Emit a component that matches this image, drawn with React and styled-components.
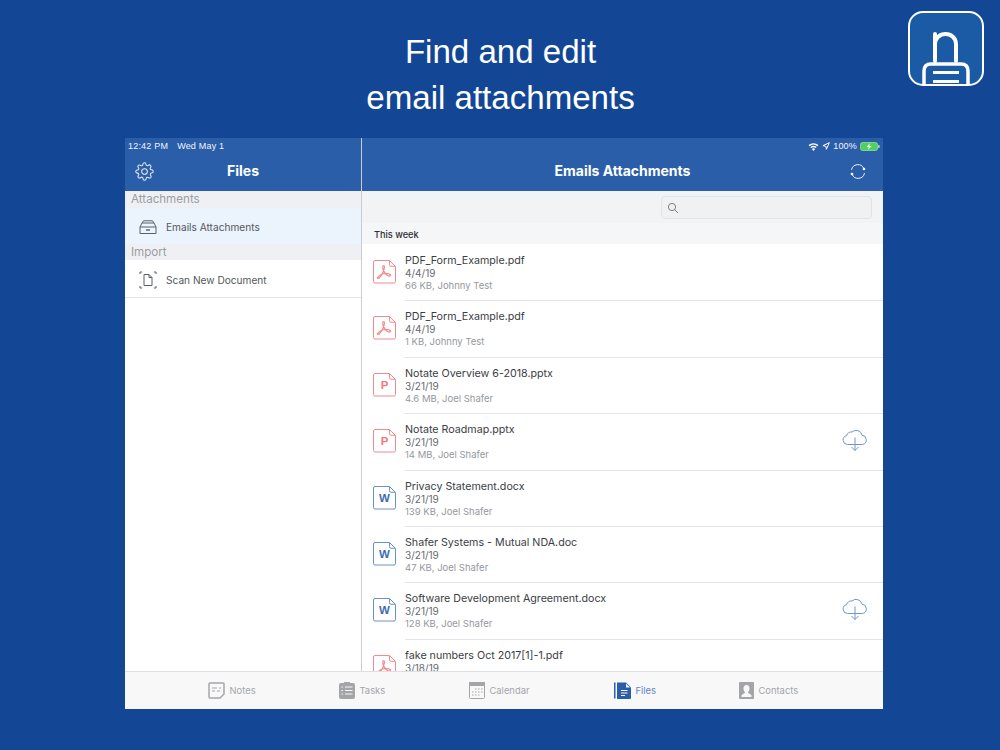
import React from "react";
import styled, { createGlobalStyle } from "styled-components";

const Global = createGlobalStyle`
  html, body { margin: 0; padding: 0; background: #134796; }
  * { box-sizing: border-box; }
`;

const Page = styled.div`
  position: relative;
  width: 1000px;
  height: 750px;
  overflow: hidden;
  background: #134796;
  font-family: "Inter", "Liberation Sans", sans-serif;
  padding-top: 29px;
`;
const Headline = styled.h1`
  margin: 0 0 17px 0;
  padding-left: 1px;
  height: 92px;
  text-align: center;
  color: #fff;
  font: 400 33.1px/46px "Liberation Sans", sans-serif;
`;
const LogoBox = styled.div`
  position: absolute;
  left: 908px;
  top: 11px;
  width: 76px;
  height: 76px;
`;
const Screen = styled.div`
  margin-left: 125px;
  width: 758px;
  height: 571px;
  background: #fff;
  display: flex;
  flex-direction: column;
  overflow: hidden;
`;
const Panes = styled.div`
  flex: 1;
  min-height: 0;
  display: flex;
`;
const Sidebar = styled.div`
  width: 237px;
  flex: none;
  border-right: 1px solid #c9ccd2;
  display: flex;
  flex-direction: column;
`;
const Main = styled.div`
  flex: 1;
  min-width: 0;
  display: flex;
  flex-direction: column;
`;
const NavBar = styled.div`
  height: 53px;
  flex: none;
  background: #2a5ea8;
  display: flex;
  flex-direction: column;
  color: #fff;
`;
const StatusRow = styled.div`
  height: 16px;
  padding: 0 3px;
  display: flex;
  align-items: center;
  justify-content: ${(p) => (p.$end ? "flex-end" : "flex-start")};
  gap: ${(p) => (p.$end ? "3px" : "9px")};
  font: 400 9px/16px "Liberation Sans", sans-serif;
  letter-spacing: 0.2px;
  color: #f2f5fa;
`;
const NavContent = styled.div`
  position: relative;
  flex: 1;
  display: flex;
  align-items: center;
  justify-content: center;
  padding-bottom: 3px;
  font: 700 14px/18px "Inter", "Liberation Sans", sans-serif;
`;
const NavIcon = styled.span`
  position: absolute;
  top: ${(p) => (p.$right ? "10px" : "8px")};
  display: flex;
  ${(p) => (p.$right ? "right: 17px;" : "left: 10px;")}
`;
const SectionHead = styled.div`
  height: ${(p) => p.$h || 16}px;
  background: #eff0f3;
  color: #9a9ea5;
  padding-left: 6px;
  font: 400 11.6px/${(p) => p.$h || 16}px "Inter", "Liberation Sans", sans-serif;
`;
const SideRow = styled.div`
  height: ${(p) => p.$h}px;
  display: flex;
  align-items: center;
  gap: 9px;
  padding: 2px 0 0 14px;
  background: ${(p) => (p.$active ? "#ebf3fd" : "#fff")};
  border-bottom: ${(p) => (p.$active ? "none" : "1px solid #e4e5e8")};
  color: #54585e;
  font: 400 10.15px/14px "Inter", "Liberation Sans", sans-serif;
`;
const SearchBand = styled.div`
  height: 32px;
  flex: none;
  background: #f2f3f5;
  display: flex;
  justify-content: flex-end;
  padding: 5px 11px 0 0;
`;
const SearchBox = styled.div`
  width: 211px;
  height: 23px;
  background: #f0f1f3;
  border: 1px solid #e2e3e6;
  border-radius: 4px;
  display: flex;
  align-items: center;
  padding-left: 5px;
`;
const WeekHead = styled.div`
  height: 21px;
  flex: none;
  background: #f5f6f7;
  color: #2c2e33;
  padding: 2px 0 0 12px;
  font: 500 9.2px/20px "Inter", "Liberation Sans", sans-serif;
`;
const List = styled.div`
  flex: 1;
  min-height: 0;
  overflow: hidden;
  padding-top: 1px;
`;
const Row = styled.div`
  height: 56.4px;
  display: flex;
  align-items: flex-start;
  padding: 8px 15px 0 11px;
  position: relative;
  &::after {
    content: "";
    position: absolute;
    left: 43px;
    right: 0;
    bottom: 0;
    height: 1px;
    background: #e4e5e8;
  }
`;
const FileIconBox = styled.div`
  width: 23px;
  height: 24px;
  margin: 7px 9px 0 0;
  flex: none;
`;
const Info = styled.div`
  flex: 1;
  min-width: 0;
`;
const FileName = styled.div`
  margin-top: 1px;
  color: #3b3e44;
  font: 400 10.68px/14px "Inter", "Liberation Sans", sans-serif;
`;
const FileDate = styled.div`
  color: #666a70;
  font: 400 10px/10px "Inter", "Liberation Sans", sans-serif;
`;
const FileMeta = styled.div`
  color: #95989e;
  font: 400 9.5px/15px "Inter", "Liberation Sans", sans-serif;
`;
const Cloud = styled.div`
  flex: none;
  margin-top: 6px;
  display: flex;
`;
const TabBar = styled.div`
  height: 38px;
  flex: none;
  background: #f8f8f9;
  border-top: 1px solid #dedfe2;
`;
const Tabs = styled.div`
  display: flex;
  height: 100%;
  padding-left: 83px;
`;
const Tab = styled.div`
  width: ${(p) => p.$w}px;
  flex: none;
  display: flex;
  align-items: center;
  gap: 4.5px;
  color: ${(p) => (p.$active ? "#5f86c2" : "#a3a5a9")};
  font: 400 9.4px/14px "Inter", "Liberation Sans", sans-serif;
`;

const Logo = () => (
  <svg width="76" height="76" viewBox="0 0 76 76">
    <defs>
      <clipPath id="lg"><rect x="1" y="1" width="74" height="73" rx="14" /></clipPath>
    </defs>
    <rect x="1" y="1" width="74" height="73" rx="14" fill="#1b5aa5" stroke="#fff" strokeWidth="2" />
    <g clipPath="url(#lg)" fill="none" stroke="#fff" strokeLinecap="round">
      <path d="M27 23V50M27 33c0-6 5-10 10.500-10s10.500 4 10.500 10v17" strokeWidth="4" />
      <path d="M16 76V60c0-4.500 2.500-7 7-7h30c4.500 0 7 2.500 7 7v16" strokeWidth="3.500" />
      <path d="M25 61.500h26M25 70.500h26" strokeWidth="3" strokeLinecap="butt" />
    </g>
  </svg>
);

const Gear = () => (
  <svg width="19" height="19" viewBox="0 0 24 24" fill="none" stroke="#e4ecf7" strokeWidth="1.3" strokeLinejoin="round">
    <circle cx="12" cy="12" r="3.6" />
    <path d="M19.4 15a1.65 1.65 0 0 0 .33 1.82l.06.06a2 2 0 1 1-2.83 2.83l-.06-.06a1.65 1.65 0 0 0-2.8 1.17V21a2 2 0 1 1-4 0v-.09A1.65 1.65 0 0 0 7.2 19.7l-.06.06a2 2 0 1 1-2.83-2.83l.06-.06a1.65 1.65 0 0 0-1.17-2.8H3a2 2 0 1 1 0-4h.09A1.65 1.65 0 0 0 4.3 7.2l-.06-.06a2 2 0 1 1 2.83-2.83l.06.06a1.65 1.65 0 0 0 2.8-1.17V3a2 2 0 1 1 4 0v.09a1.65 1.65 0 0 0 2.8 1.17l.06-.06a2 2 0 1 1 2.83 2.83l-.06.06a1.65 1.65 0 0 0 1.17 2.8H21a2 2 0 1 1 0 4h-.09A1.65 1.65 0 0 0 19.4 15z" />
  </svg>
);

const Refresh = () => (
  <svg width="16" height="15" viewBox="0 0 16 15" fill="none" stroke="#eef3fa" strokeWidth="1">
    <path d="M1.500 5.800A6.500 6.500 0 0 1 13.800 4.500" />
    <path d="M14.500 9.200A6.500 6.500 0 0 1 2.200 10.500" />
    <circle cx="14" cy="5" r="1.300" fill="#fff" stroke="none" />
    <circle cx="2" cy="10" r="1.300" fill="#fff" stroke="none" />
  </svg>
);

const Wifi = () => (
  <svg width="11" height="9" viewBox="0 0 11 9" fill="#fff">
    <path d="M5.5 9 3.9 7a2.4 2.4 0 0 1 3.2 0zM3.2 6.1 2.3 5a5 5 0 0 1 6.4 0l-.9 1.1a3.6 3.6 0 0 0-4.6 0zM1.6 4.2.6 3a7.6 7.6 0 0 1 9.8 0l-1 1.2a6 6 0 0 0-7.8 0z" />
  </svg>
);
const Arrow = () => (
  <svg width="8" height="8" viewBox="0 0 8 8" fill="none" stroke="#fff" strokeWidth="1">
    <path d="M7.3.7.9 3.7l3 .6.5 3z" strokeLinejoin="round" />
  </svg>
);
const Battery = () => (
  <svg width="20" height="9" viewBox="0 0 20 9">
    <rect x=".5" y=".5" width="17" height="8" rx="2" fill="#4cd35a" stroke="#9fd6a8" strokeWidth=".8" />
    <rect x="18.2" y="3" width="1.3" height="3" rx=".6" fill="#cfe0f0" />
    <path d="M9.8 1.3 6.5 5h2.2l-.6 2.7L11.5 4H9.3z" fill="#fff" />
  </svg>
);
const Drawer = () => (
  <svg width="18" height="14" viewBox="0 0 18 14" fill="none" stroke="#5a5e65" strokeWidth="1">
    <path d="M3 3 4.500.8h9L15 3" />
    <path d="M1 7 3 3h12l2 4" />
    <path d="M1 7h16v6.500H1z" />
    <path d="M7 10h4" strokeWidth="1.400" />
  </svg>
);
const Scan = () => (
  <svg width="18" height="18" viewBox="0 0 18 18" fill="none" stroke="#5a5e65" strokeWidth="1">
    <path d="M1 3V1h2M15 1h2v2M1 15v2h2M15 17h2v-2" />
    <path d="M5 3.500h5l3 3v8H5z" strokeLinejoin="round" />
    <path d="M10 3.500v3h3" />
  </svg>
);
const Mag = () => (
  <svg width="12" height="12" viewBox="0 0 12 12" fill="none" stroke="#7c7f85" strokeWidth="1">
    <circle cx="5" cy="5" r="3.6" />
    <path d="M7.7 7.7 11 11" />
  </svg>
);

const FileShape = ({ color, children }) => (
  <svg width="23" height="24" viewBox="0 0 23 24" fill="none" stroke={color} strokeWidth="1">
    <path d="M2 .5h14.500L22.500 6.500V21.500a1.500 1.500 0 0 1-1.500 1.500H2a1.500 1.500 0 0 1-1.500-1.500V2A1.500 1.500 0 0 1 2 .5z" strokeLinejoin="round" />
    <path d="M16.500.8v4a1.500 1.500 0 0 0 1.500 1.500h4.300" />
    {children}
  </svg>
);
const PdfGlyph = () => (
  <path d="M10.500 5.500C9.500 5.500 9.500 8 10.500 10.500 12 14 15 16.500 17 16 18.500 15.500 17 13.500 13.500 13.500 10 13.500 6 15.500 4.500 17.500 3.800 18.500 5 19 6.500 17.500 9 15 11.500 9.500 11.500 7 11.500 6 11 5.500 10.500 5.500z" strokeWidth="1.200" />
);
const LetterText = styled.text`
  font: 700 11.5px "Liberation Sans", sans-serif;
`;
const FileIcon = ({ kind }) => {
  if (kind === "pdf") return <FileShape color="#f58a8d"><PdfGlyph /></FileShape>;
  const color = kind === "ppt" ? "#f58a8d" : "#6a90c8";
  const ink = kind === "ppt" ? "#f47a7d" : "#3c6db3";
  return (
    <FileShape color={color}>
      <LetterText x="11.500" y="16" textAnchor="middle" fill={ink} stroke="none">{kind === "ppt" ? "P" : "W"}</LetterText>
    </FileShape>
  );
};
const CloudIcon = () => (
  <svg width="26" height="24" viewBox="0 0 26 24" fill="none" stroke="#6e97ce" strokeWidth="1">
    <path d="M9 16.500H5.500a4.500 4.500 0 0 1-.8-8.900A4.500 4.500 0 0 1 10 4a6 6 0 0 1 10 3.200 4.700 4.700 0 0 1 .5 9.300H17" strokeLinecap="round" />
    <path d="M13 9.500V22.500M9.500 19 13 22.500 16.500 19" />
    <path d="M9 16.500h8" />
  </svg>
);

const NotesIcon = () => (
  <svg width="17" height="17" viewBox="0 0 17 17" fill="none" stroke="#a3a5a9" strokeWidth="1.500">
    <path d="M2 1h13a1 1 0 0 1 1 1v10l-4 4H2a1 1 0 0 1-1-1V2a1 1 0 0 1 1-1z" />
    <path d="M4 6h5M11 6h2M4 9h3M9 9h3" strokeWidth="1.200" />
  </svg>
);
const TasksIcon = () => (
  <svg width="16" height="17" viewBox="0 0 16 17">
    <rect y="1" width="16" height="16" rx="2" fill="#a3a5a9" />
    <rect x="5" width="6" height="2" fill="#a3a5a9" />
    <path d="M2.500 5h1.500M6 5h7.500M2.500 8.500h1.500M6 8.500h7.500M2.500 12h1.500M6 12h7.500" stroke="#f8f8f9" strokeWidth="1.200" />
  </svg>
);
const CalIcon = () => (
  <svg width="16" height="17" viewBox="0 0 16 17">
    <rect x=".5" y=".5" width="15" height="16" rx="1" fill="none" stroke="#a3a5a9" />
    <rect width="16" height="4" fill="#a3a5a9" />
    <path d="M6 7h1.500M9 7h1.500M12 7h1.500M3 10h1.500M6 10h1.500M9 10h1.500M12 10h1.500M3 13h1.500M6 13h1.500M9 13h1.500" stroke="#a3a5a9" strokeWidth="1.200" />
  </svg>
);
const FilesIcon = () => (
  <svg width="17" height="17" viewBox="0 0 17 17" fill="#2a5ea8">
    <rect x="0" y=".5" width="1.500" height="16" />
    <path d="M3 .5h9l5 5V16a1 1 0 0 1-1 1H3z" />
    <path d="M12 1.500v4h4z" fill="#f8f8f9" />
    <path d="M7 8.500h6.500M7 11h6.500M7 13.500h4" stroke="#f8f8f9" strokeWidth="1.200" />
  </svg>
);
const ContactsIcon = () => (
  <svg width="15" height="17" viewBox="0 0 15 17">
    <rect width="15" height="17" rx="1" fill="#a3a5a9" />
    <path d="M7.500 3c2 0 3 1.500 3 3.500S9.500 9.500 9 10.500c0 1 3 1.500 3.500 3V15h-10v-1.500c.5-1.500 3.500-2 3.500-3C5.500 9.500 4.500 8.500 4.500 6.500S5.500 3 7.500 3z" fill="#f8f8f9" />
  </svg>
);

const files = [
  { name: "PDF_Form_Example.pdf", date: "4/4/19", meta: "66 KB, Johnny Test", kind: "pdf" },
  { name: "PDF_Form_Example.pdf", date: "4/4/19", meta: "1 KB, Johnny Test", kind: "pdf" },
  { name: "Notate Overview 6-2018.pptx", date: "3/21/19", meta: "4.6 MB, Joel Shafer", kind: "ppt" },
  { name: "Notate Roadmap.pptx", date: "3/21/19", meta: "14 MB, Joel Shafer", kind: "ppt", cloud: true },
  { name: "Privacy Statement.docx", date: "3/21/19", meta: "139 KB, Joel Shafer", kind: "doc" },
  { name: "Shafer Systems - Mutual NDA.doc", date: "3/21/19", meta: "47 KB, Joel Shafer", kind: "doc" },
  { name: "Software Development Agreement.docx", date: "3/21/19", meta: "128 KB, Joel Shafer", kind: "doc", cloud: true },
  { name: "fake numbers Oct 2017[1]-1.pdf", date: "3/18/19", meta: "", kind: "pdf" },
];

const tabs = [
  { label: "Notes", Icon: NotesIcon, w: 131 },
  { label: "Tasks", Icon: TasksIcon, w: 130 },
  { label: "Calendar", Icon: CalIcon, w: 145 },
  { label: "Files", Icon: FilesIcon, w: 125, active: true },
  { label: "Contacts", Icon: ContactsIcon, w: 100 },
];

export default function App() {
  return (
    <Page>
      <Global />
      <LogoBox><Logo /></LogoBox>
      <Headline>Find and edit<br />email attachments</Headline>
      <Screen>
        <Panes>
          <Sidebar>
            <NavBar>
              <StatusRow><span>12:42 PM</span><span>Wed May 1</span></StatusRow>
              <NavContent>
                <NavIcon><Gear /></NavIcon>
                Files
              </NavContent>
            </NavBar>
            <SectionHead $h={17}>Attachments</SectionHead>
            <SideRow $h={36} $active><Drawer />Emails Attachments</SideRow>
            <SectionHead>Import</SectionHead>
            <SideRow $h={38}><Scan />Scan New Document</SideRow>
          </Sidebar>
          <Main>
            <NavBar>
              <StatusRow $end><Wifi /><Arrow /><span>100%</span><Battery /></StatusRow>
              <NavContent>
                Emails Attachments
                <NavIcon $right><Refresh /></NavIcon>
              </NavContent>
            </NavBar>
            <SearchBand><SearchBox><Mag /></SearchBox></SearchBand>
            <WeekHead>This week</WeekHead>
            <List>
              {files.map((f, i) => (
                <Row key={i}>
                  <FileIconBox><FileIcon kind={f.kind} /></FileIconBox>
                  <Info>
                    <FileName>{f.name}</FileName>
                    <FileDate>{f.date}</FileDate>
                    <FileMeta>{f.meta}</FileMeta>
                  </Info>
                  {f.cloud && <Cloud><CloudIcon /></Cloud>}
                </Row>
              ))}
            </List>
          </Main>
        </Panes>
        <TabBar>
          <Tabs>
            {tabs.map(({ label, Icon, w, active }) => (
              <Tab key={label} $w={w} $active={active}><Icon />{label}</Tab>
            ))}
          </Tabs>
        </TabBar>
      </Screen>
    </Page>
  );
}
